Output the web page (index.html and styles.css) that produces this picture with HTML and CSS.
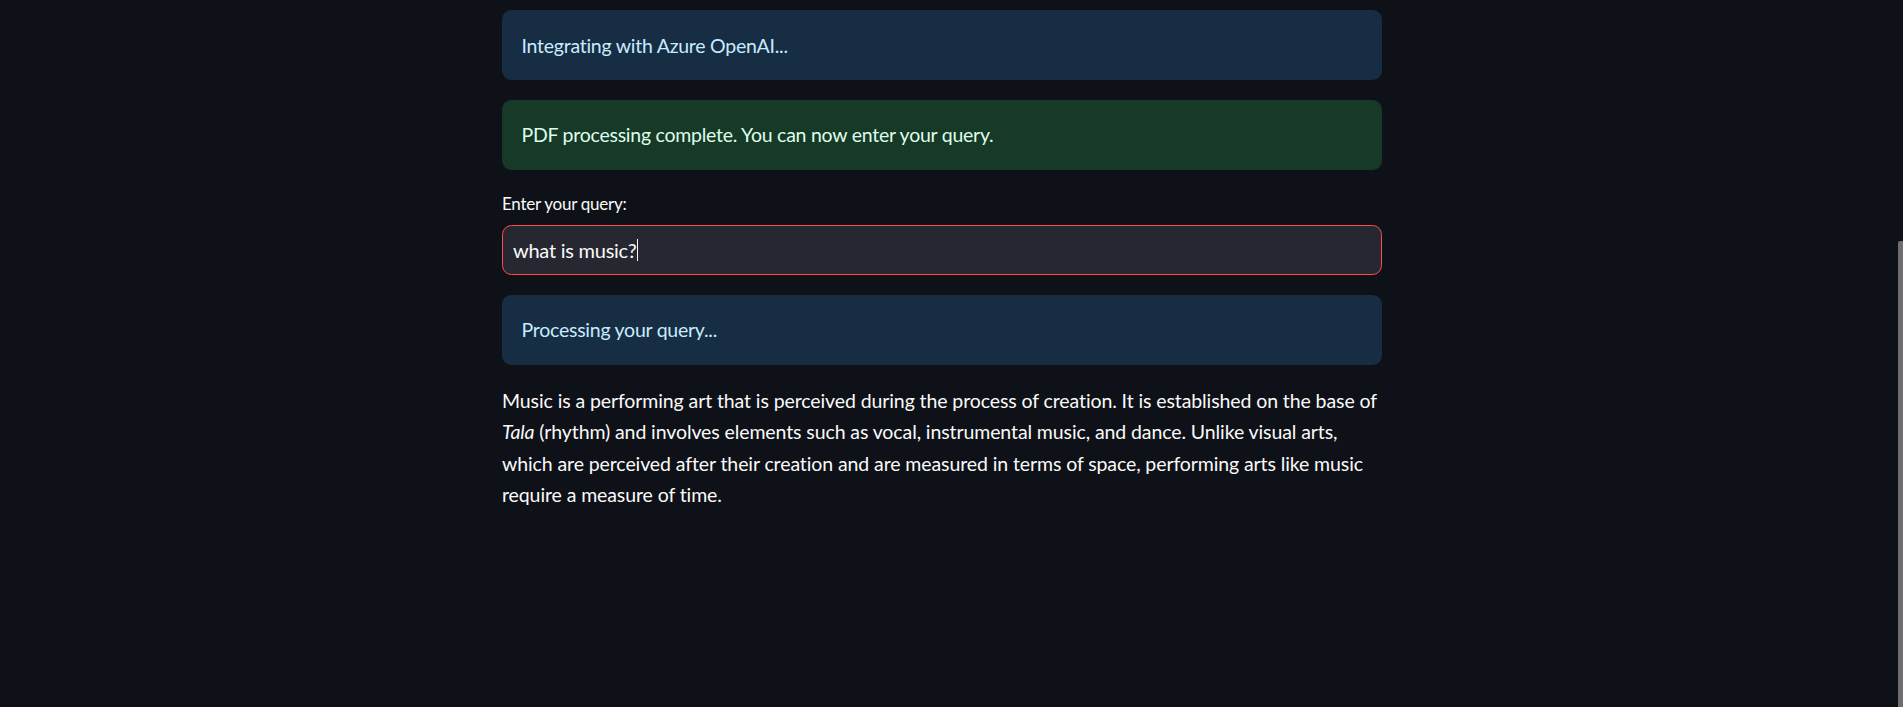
FILE: index.html
```html
<!DOCTYPE html>
<html lang="en">
<head>
<meta charset="utf-8">
<title>PDF Query</title>
<link rel="stylesheet" href="styles.css">
</head>
<body>
<div class="app">
  <main class="block">
    <div class="alert alert-info">Integrating with Azure OpenAI...</div>
    <div class="alert alert-success">PDF processing complete. You can now enter your query.</div>
    <div class="field">
      <label class="field-label">Enter your query:</label>
      <div class="input">what is music?<span class="caret"></span></div>
    </div>
    <div class="alert alert-info">Processing your query...</div>
    <p class="answer">Music is a performing art that is perceived during the process of creation. It is established on the base of <em>Tala</em> (rhythm) and involves elements such as vocal, instrumental music, and dance. Unlike visual arts, which are perceived after their creation and are measured in terms of space, performing arts like music require a measure of time.</p>
  </main>
</div>
<div class="scroll-thumb"></div>
</body>
</html>
```

FILE: styles.css
```css
html, body {
  margin: 0;
  padding: 0;
  background: #0e1117;
  height: 100%;
  overflow: hidden;
}

body {
  font-family: "Lato", "Noto Sans", sans-serif;
  color: #fafafa;
  font-size: 19.5px;
  letter-spacing: -0.25px;
}

.app {
  padding-right: 19px;
}

.block {
  width: 880px;
  margin: 0 auto;
  padding-top: 10px;
  display: flex;
  flex-direction: column;
  gap: 19.5px;
}

.alert {
  border-radius: 9.5px;
  padding: 19.5px;
  line-height: 31.2px;
}

.alert-info {
  background: #172d43;
  color: #c7ebff;
}

.alert-success {
  background: #173928;
  color: #dffde9;
}

.field {
  display: flex;
  flex-direction: column;
}

.field-label {
  font-size: 17px;
  min-height: 29px;
  margin-bottom: 7px;
  display: flex;
  align-items: center;
  color: #fafafa;
}

.input {
  box-sizing: border-box;
  height: 50px;
  border: 1px solid #ff4b4b;
  border-radius: 9.5px;
  background: #262730;
  padding: 0 10px;
  display: flex;
  align-items: center;
  color: #fafafa;
  font-size: 20px;
}

.caret {
  display: inline-block;
  width: 1px;
  height: 22px;
  background: #fafafa;
  margin-left: 1px;
}

.answer {
  margin: 0;
  line-height: 31.6px;
  letter-spacing: -0.1px;
}

.scroll-thumb {
  position: fixed;
  right: 0;
  top: 241px;
  bottom: 0;
  width: 5px;
  background: #6e6e6e;
  border-top-left-radius: 2px;
}
```
